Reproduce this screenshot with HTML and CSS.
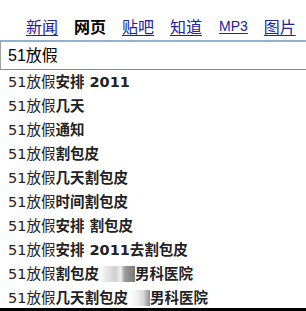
FILE: index.html
```
<!DOCTYPE html>
<html lang="zh">

<head>
    <meta charset="UTF-8">
    <meta name="viewport" content="width=device-width, initial-scale=1.0">
    <title>51放假 - 搜索建议</title>
    <link rel="stylesheet" href="styles.css">
</head>

<body>
    <div class="nav">
        <a href="#">新闻</a>
        <b class="current">网页</b>
        <a href="#">贴吧</a>
        <a href="#">知道</a>
        <a href="#" class="mp3">MP3</a>
        <a href="#">图片</a>
    </div>

    <div class="search">51放假</div>

    <ul class="suggest">
        <li>51放假<b>安排 2011</b></li>
        <li>51放假<b>几天</b></li>
        <li>51放假<b>通知</b></li>
        <li>51放假<b>割包皮</b></li>
        <li>51放假<b>几天割包皮</b></li>
        <li>51放假<b>时间割包皮</b></li>
        <li>51放假<b>安排 割包皮</b></li>
        <li>51放假<b>安排 2011去割包皮</b></li>
        <li>51放假<b>割包皮<span class="blur blur-a"></span>男科医院</b></li>
        <li>51放假<b>几天割包皮<span class="blur blur-b"></span>男科医院</b></li>
    </ul>

    <div class="frame-edge"></div>
</body>

</html>
```

FILE: styles.css
```
body, html {
    margin: 0;
    padding: 0;
    background-color: #fff;
    overflow: hidden;
}

.nav {
    height: 40px;
    box-sizing: border-box;
    padding: 17px 0 0 26px;
    display: flex;
    gap: 16px;
    font-family: "Noto Sans CJK SC", sans-serif;
    font-size: 16px;
    line-height: 18px;
}

.nav a {
    color: #22229a;
    text-decoration: underline;
    text-underline-offset: 2px;
}

.nav .current {
    color: #000;
    font-weight: bold;
}

.nav .mp3 {
    font-family: "Liberation Sans", sans-serif;
    font-size: 14px;
    margin-left: 1px;
}

.search {
    height: 30px;
    box-sizing: border-box;
    border-top: 2px solid #94b0c8;
    border-left: 1px solid #a0a0a0;
    border-bottom: 1px solid #8a8a8a;
    padding-left: 7px;
    font-family: "Liberation Sans", "Noto Sans CJK SC", sans-serif;
    font-size: 16px;
    line-height: 28px;
    color: #000;
}

.suggest {
    list-style: none;
    margin: 0;
    padding: 0 0 0 8px;
    font-family: "DejaVu Sans", "Noto Sans CJK SC", sans-serif;
    font-size: 14.5px;
    color: #222;
}

.suggest li {
    height: 24px;
    line-height: 24px;
    white-space: nowrap;
}

.suggest b {
    font-weight: bold;
}

.blur {
    display: inline-block;
    height: 16px;
    vertical-align: -3px;
}

.blur-a {
    width: 36px;
    background: linear-gradient(90deg, #fff 0%, #e4e4e4 25%, #cfcfcf 45%, #eee 60%, #9a9a9a 72%, #7a7a7a 100%);
}

.blur-b {
    width: 22px;
    background: linear-gradient(90deg, #fff 0%, #f2f2f2 40%, #d8d8d8 70%, #8e8e8e 100%);
}

.frame-edge {
    position: fixed;
    left: 0;
    right: 0;
    bottom: 0;
    height: 3px;
    background-color: #000;
}
```
